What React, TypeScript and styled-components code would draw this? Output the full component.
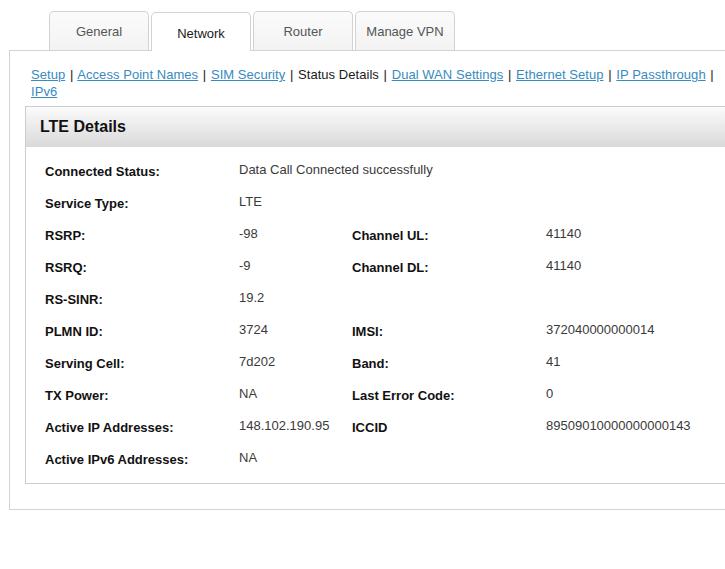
import React from "react";
import styled, { createGlobalStyle } from "styled-components";

const GlobalStyle = createGlobalStyle`
  html, body {
    margin: 0;
    padding: 0;
    background: #ffffff;
    overflow: hidden;
  }
  body {
    font-family: "Liberation Sans", Arial, sans-serif;
  }
`;

const Page = styled.div`
  width: 760px;
  padding-top: 11px;
`;

const TabBar = styled.div`
  display: flex;
  align-items: flex-end;
  gap: 2px;
  margin-left: 49px;
  height: 40px;
  margin-bottom: -1px;
  position: relative;
  z-index: 2;
`;

const Tab = styled.div<{ $active?: boolean }>`
  box-sizing: border-box;
  width: 100px;
  height: 39px;
  border: 1px solid #d2d2d2;
  border-bottom: none;
  border-radius: 5px 5px 0 0;
  background: ${(p) => (p.$active ? "#ffffff" : "linear-gradient(#fbfbfb, #f3f3f3)")};
  margin-bottom: ${(p) => (p.$active ? "0" : "1px")};
  color: ${(p) => (p.$active ? "#1a1a1a" : "#555555")};
  font-size: 13px;
  display: flex;
  align-items: center;
  justify-content: center;
  padding-top: ${(p) => (p.$active ? "2px" : "0")};
`;

const Panel = styled.div`
  margin-left: 9px;
  width: 740px;
  border: 1px solid #d3d3d3;
  position: relative;
  z-index: 1;
  background: #ffffff;
`;

const LinkRow = styled.div`
  padding: 15px 30px 0 21px;
  font-size: 13px;
  line-height: 17px;
  color: #1a1a1a;
  letter-spacing: 0.05px;
`;

const NavLink = styled.a`
  color: #378bc1;
  text-decoration: underline;
  cursor: pointer;
`;

const Current = styled.span`
  color: #1a1a1a;
`;

const Separator = styled.span`
  color: #1a1a1a;
  margin: 0 1px;
`;

const DetailsBox = styled.div`
  margin: 6px 0 25px 15px;
  border: 1px solid #cccccc;
`;

const BoxHeader = styled.div`
  height: 40px;
  display: flex;
  align-items: center;
  padding-left: 14px;
  background: linear-gradient(#fbfbfb, #d9d9d9);
  font-size: 16px;
  font-weight: bold;
  color: #111111;
`;

const DetailsGrid = styled.div`
  display: grid;
  grid-template-columns: 194px 113px 194px auto;
  grid-auto-rows: 32px;
  padding: 8px 0 8px 19px;
  align-items: center;
  font-size: 13px;
`;

const Label = styled.div`
  font-weight: bold;
  color: #111111;
`;

const Value = styled.div<{ $wide?: boolean }>`
  color: #3a3a3a;
  padding-bottom: 4px;
  grid-column: ${(p) => (p.$wide ? "2 / span 3" : "auto")};
`;

type Row = [string, string, string?, string?];

const rows: Row[] = [
  ["Connected Status:", "Data Call Connected successfully"],
  ["Service Type:", "LTE"],
  ["RSRP:", "-98", "Channel UL:", "41140"],
  ["RSRQ:", "-9", "Channel DL:", "41140"],
  ["RS-SINR:", "19.2"],
  ["PLMN ID:", "3724", "IMSI:", "372040000000014"],
  ["Serving Cell:", "7d202", "Band:", "41"],
  ["TX Power:", "NA", "Last Error Code:", "0"],
  ["Active IP Addresses:", "148.102.190.95", "ICCID", "89509010000000000143"],
  ["Active IPv6 Addresses:", "NA"],
];

const links: { text: string; current?: boolean }[] = [
  { text: "Setup" },
  { text: "Access Point Names" },
  { text: "SIM Security" },
  { text: "Status Details", current: true },
  { text: "Dual WAN Settings" },
  { text: "Ethernet Setup" },
  { text: "IP Passthrough" },
  { text: "IPv6" },
];

export default function App() {
  return (
    <>
      <GlobalStyle />
      <Page>
        <TabBar>
          <Tab>General</Tab>
          <Tab $active>Network</Tab>
          <Tab>Router</Tab>
          <Tab>Manage VPN</Tab>
        </TabBar>
        <Panel>
          <LinkRow>
            {links.map((l, i) => (
              <React.Fragment key={l.text}>
                {l.current ? <Current>{l.text}</Current> : <NavLink>{l.text}</NavLink>}
                {i < links.length - 1 ? (
                  <>
                    {"\u00a0"}
                    <Separator>|</Separator>{" "}
                  </>
                ) : null}
              </React.Fragment>
            ))}
          </LinkRow>
          <DetailsBox>
            <BoxHeader>LTE Details</BoxHeader>
            <DetailsGrid>
              {rows.map((r) => (
                <React.Fragment key={r[0]}>
                  <Label>{r[0]}</Label>
                  {r[2] ? (
                    <>
                      <Value>{r[1]}</Value>
                      <Label>{r[2]}</Label>
                      <Value>{r[3]}</Value>
                    </>
                  ) : (
                    <Value $wide>{r[1]}</Value>
                  )}
                </React.Fragment>
              ))}
            </DetailsGrid>
          </DetailsBox>
        </Panel>
      </Page>
    </>
  );
}
